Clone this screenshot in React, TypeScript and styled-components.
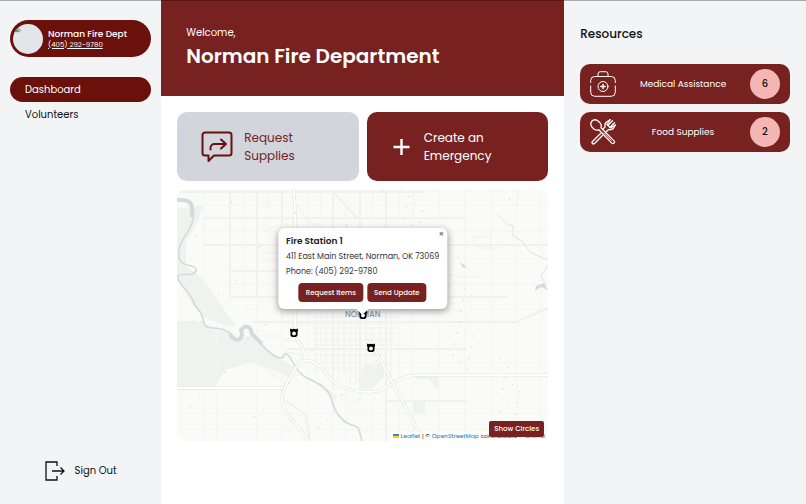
import React from "react";
import styled, { createGlobalStyle, css } from "styled-components";

const colors = {
  maroon: "#6a110b",
  brick: "#772220",
  panel: "#f2f4f6",
  slate: "#d2d5dc",
  pink: "#f4b5b5",
  ink: "#111111",
};

const GlobalStyle = createGlobalStyle`
  *, *::before, *::after { box-sizing: border-box; }
  body {
    margin: 0;
    background: #fff;
    color: ${colors.ink};
    font-family: Poppins, Inter, "Open Sans", sans-serif;
  }
  button { font-family: inherit; border: 0; cursor: pointer; }
  h1, h2, h3, p, ul { margin: 0; padding: 0; }
  ul { list-style: none; }
  a { color: inherit; }
`;

const Page = styled.div`
  display: grid;
  grid-template-columns: 2fr 5fr 3fr;
  min-height: 100vh;
`;

const Sidebar = styled.aside`
  display: flex;
  flex-direction: column;
  padding: 19px 10px 20px;
  background: ${colors.panel};
  border-top: 1px solid #aaa9ad;
`;

const Profile = styled.div`
  display: flex;
  align-items: center;
  gap: 5px;
  height: 37px;
  padding: 0 3px;
  border-radius: 19px;
  background: ${colors.maroon};
  color: #fff;
`;

const Avatar = styled.div`
  flex: none;
  width: 30px;
  height: 30px;
  border-radius: 50%;
  overflow: hidden;
  background: #e3e5e9;
  svg { display: block; }
`;

const ProfileText = styled.div`
  white-space: nowrap;
`;

const ProfileName = styled.p`
  font-size: 9px;
  line-height: 12px;
  font-weight: 500;
`;

const Phone = styled.a`
  display: block;
  font-size: 7px;
  line-height: 10px;
`;

const Nav = styled.nav`
  margin-top: 20px;
`;

const NavLink = styled.a<{ $active?: boolean }>`
  display: block;
  padding: 0 15px;
  border-radius: 13px;
  font-size: 10px;
  line-height: 25px;
  text-decoration: none;
  ${(p) =>
    p.$active &&
    css`
      background: ${colors.maroon};
      color: #fff;
    `}
`;

const SignOut = styled.button`
  display: flex;
  align-items: center;
  align-self: center;
  gap: 10px;
  margin-top: auto;
  padding: 0;
  background: none;
  color: ${colors.ink};
  font-size: 10px;
  line-height: 26px;
`;

const Main = styled.main`
  min-width: 0;
`;

const Banner = styled.header`
  display: flex;
  flex-direction: column;
  justify-content: center;
  height: 96px;
  padding: 0 25px 4px;
  border-top: 1px solid #5b1715;
  background: ${colors.brick};
  color: #fff;
`;

const Greeting = styled.p`
  font-size: 10px;
  line-height: 18px;
`;

const Title = styled.h1`
  font-size: 20px;
  line-height: 28px;
  font-weight: 600;
`;

const Content = styled.div`
  display: grid;
  gap: 8px;
  padding: 16px;
`;

const Actions = styled.div`
  display: grid;
  grid-template-columns: 1fr 1fr;
  gap: 8px;
`;

const ActionButton = styled.button<{ $primary?: boolean }>`
  display: flex;
  align-items: center;
  gap: 11px;
  min-height: 69px;
  padding: 0 24px;
  border-radius: 10px;
  background: ${(p) => (p.$primary ? colors.brick : colors.slate)};
  color: ${(p) => (p.$primary ? "#fff" : colors.brick)};
  font-size: 12px;
  line-height: 18px;
  text-align: left;
  svg { flex: none; }
`;

const ActionLabel = styled.span`
  width: 76px;
`;

const MapFrame = styled.section`
  position: relative;
  height: 50vh;
  border-radius: 10px;
  overflow: hidden;
  background: #fafaf8;
`;

const MapDrawing = styled.svg`
  display: block;
  width: 100%;
  height: 100%;
`;

const CityLabel = styled.span`
  position: absolute;
  left: 50%;
  top: 50%;
  transform: translate(-50%, -50%);
  color: #9299a6;
  font-size: 8px;
  font-weight: 500;
  line-height: 10px;
`;

const Pin = styled.button<{ $x: number; $y: number }>`
  position: absolute;
  left: ${(p) => p.$x}%;
  top: ${(p) => p.$y}%;
  padding: 0;
  background: none;
  transform: translate(-50%, -50%);
  svg { display: block; }
`;

const Popup = styled.div`
  position: absolute;
  left: 50%;
  bottom: calc(50% + 6px);
  transform: translateX(-50%);
  padding: 7px 8px 7px;
  border-radius: 6px;
  background: #fff;
  box-shadow: 0 2px 7px rgba(0, 0, 0, 0.4);
  color: #333;
  white-space: nowrap;
  &::after {
    content: "";
    position: absolute;
    left: 50%;
    top: 100%;
    transform: translateX(-50%);
    border: 6px solid transparent;
    border-top-color: #fff;
    border-bottom: 0;
  }
`;

const PopupTitle = styled.h3`
  font-size: 9px;
  line-height: 12px;
  font-weight: 600;
  color: #222;
`;

const PopupLine = styled.p`
  margin-top: 5px;
  font-size: 8px;
  line-height: 10px;
`;

const PopupActions = styled.div`
  display: flex;
  justify-content: center;
  gap: 4px;
  margin-top: 6px;
`;

const SmallButton = styled.button`
  padding: 0 7px;
  border-radius: 4px;
  background: ${colors.brick};
  color: #fff;
  font-size: 7px;
  font-weight: 500;
  line-height: 19px;
`;

const CloseButton = styled.button`
  position: absolute;
  top: 2px;
  right: 3px;
  padding: 0;
  background: none;
  color: #555;
  font-size: 9px;
  line-height: 9px;
`;

const Attribution = styled.div`
  position: absolute;
  right: 0;
  bottom: 0;
  padding: 0 3px;
  background: rgba(255, 255, 255, 0.8);
  color: #333;
  font-size: 6px;
  line-height: 9px;
  white-space: nowrap;
  a { color: #2678a5; text-decoration: none; }
`;

const CirclesButton = styled(SmallButton)`
  position: absolute;
  right: 4px;
  bottom: 4px;
  padding: 0 5px;
  border-radius: 2px;
  line-height: 16px;
`;

const Resources = styled.aside`
  padding: 22px 16px;
  border-top: 1px solid #aaa9ad;
  background: ${colors.panel};
`;

const ResourcesTitle = styled.h2`
  font-size: 12px;
  line-height: 22px;
  font-weight: 500;
`;

const ResourceList = styled.ul`
  display: grid;
  gap: 8px;
  margin-top: 19px;
`;

const Resource = styled.li`
  display: flex;
  align-items: center;
  justify-content: space-between;
  height: 40px;
  padding: 0 10px;
  border-radius: 10px;
  background: ${colors.brick};
  color: #fff;
  font-size: 9px;
`;

const Count = styled.span`
  width: 30px;
  border-radius: 50%;
  background: ${colors.pink};
  color: ${colors.ink};
  font-size: 10px;
  font-weight: 500;
  line-height: 30px;
  text-align: center;
`;

const BrokenImage = () => (
  <svg width="9" height="9" viewBox="0 0 9 9" aria-hidden="true">
    <path d="M1 5h7v4H1z" fill="#c8dcf2" />
    <path d="M1 8l3-3 3 3z" fill="#59a84c" />
    <path d="M1 5h5l2 2" stroke="#8c9194" fill="none" />
  </svg>
);

const SignOutIcon = () => (
  <svg width="20" height="20" viewBox="0 0 20 20" fill="none" stroke="#111" strokeWidth="1.3" aria-hidden="true">
    <path d="M12 5V1H1v18h11v-4" />
    <path d="M7 10h12M15.500 6.500L19 10l-3.500 3.500" />
  </svg>
);

const RequestIcon = () => (
  <svg width="32" height="32" viewBox="0 0 32 32" fill="none" stroke={colors.maroon} strokeWidth="2" strokeLinejoin="round" aria-hidden="true">
    <path d="M4 1.500h24a2.500 2.500 0 0 1 2.500 2.500v18a2.500 2.500 0 0 1-2.500 2.500H13L7.500 30v-5.500H4A2.500 2.500 0 0 1 1.500 22V4A2.500 2.500 0 0 1 4 1.500z" />
    <path d="M9.500 18.500v-1.500a4 4 0 0 1 4-4h11M20 8.500l5 4.500-5 4.500" strokeLinecap="round" />
  </svg>
);

const PlusIcon = () => (
  <svg width="22" height="22" viewBox="0 0 22 22" stroke="#fff" strokeWidth="2.4" aria-hidden="true">
    <path d="M10.500 3v16M2.500 11h16" />
  </svg>
);

const MedicalIcon = () => (
  <svg width="26" height="26" viewBox="0 0 26 26" fill="none" stroke="#fff" strokeWidth="1" strokeLinecap="round" aria-hidden="true">
    <path d="M8 5.500V3a2.300 2.300 0 0 1 2.300-2.300h5.400A2.300 2.300 0 0 1 18 3v2.500" />
    <path d="M.7 11.500V9.500a4 4 0 0 1 4-4h16.600a4 4 0 0 1 4 4v2M.7 15v6.300a4 4 0 0 0 4 4h16.600a4 4 0 0 0 4-4V15" />
    <circle cx="13" cy="15.500" r="5" />
    <path d="M13 13.300v4.400M10.800 15.500h4.400" strokeWidth="1.300" />
  </svg>
);

const FoodIcon = () => (
  <svg width="26" height="26" viewBox="0 0 26 26" fill="none" stroke="#fff" strokeWidth="1.300" strokeLinejoin="round" strokeLinecap="round" aria-hidden="true">
    <path d="M10.500 14.500l-8 8a1.400 1.400 0 0 0 2 2l8-8M15.500 13.500l3-3c2 .6 3.700.1 4.800-1L25.300 6M20 .8L16.500 3c-1.600 1.500-2 3.200-1.400 5L12.500 10.500" />
    <path d="M22.500 1.800L18.500 5.800M24.500 3.800L20.500 7.800M20 .8L17 5.500l3.500 3.500 4.800-3" />
    <path d="M8.800 10.800l13 13.300a1.500 1.500 0 0 0 2.200-2.200L11 8.700C11.800 6.500 10.500 3.800 8 2 5.800.4 3.500.4 2 2S.5 6 2 8.200c1.700 2.400 4.500 3.500 6.800 2.600z" fill={colors.brick} />
    <path d="M14 13.800l7 7.200" strokeWidth=".8" />
  </svg>
);

const StationIcon = () => (
  <svg width="9" height="10" viewBox="0 0 9 10" aria-hidden="true">
    <path d="M1 .5l1.500.8L4.500.8l2 .5L8 .5l.7 2L8 4v3.500L6.500 9h-4L1 7.500V4L.3 2.500z" fill="#000" />
    <circle cx="4.500" cy="5.500" r="1.900" fill="#fff" />
  </svg>
);

const specks = Array.from({ length: 125 }, (_, i) => ({
  x: i < 75 ? 225 + ((i * 47) % 140) : (i * 61) % 215,
  y: (i * 83 + (i % 7) * 13) % 248,
  dx: (i % 3) - 1,
  dy: 1 + (i % 2),
}));

const highways = [
  "M117 0L118 20V146C118 151 126 154 126 162C126 174 107 190 105 209C104 222 117 232 133 253",
  "M125 172C145 169 147 188 162 197C172 202 184 203 193 203C212 203 217 187 240 186H371",
  "M0 199H105",
  "M192 150L210 183L247 253",
];

const CityMap = () => (
  <MapDrawing viewBox="0 0 371 252" preserveAspectRatio="xMidYMid slice" fill="none" aria-hidden="true">
    <rect width="371" height="252" fill="#fafaf9" />
    <g fill="#eff3ef">
      <path d="M0 20L27 16L18 38L9 52V77L27 91L42 113L51 126L60 137H50L25 128L14 113L0 90z" />
      <path d="M0 132H25L38 141H53L61 151L76 145L93 163L120 180L113 188L74 173L48 181L36 201H0z" />
      <path d="M187 175H207V188L194 200H182zM236 187H261V200L251 190H240zM236 212H248V224H236zM128 186L153 201L160 207L157 214L145 199z" />
    </g>
    <g stroke="#f4f4f4" strokeWidth="1">
      <path d="M27 0V252M40 132V252M53 0V122M66 3V108M80 0V252M92 0V115M105 0V252M131 3V252M144 0V175M156 0V252M169 0V252M183 0V252M196 0V252M209 0V252M222 0V252M236 0V252M262 0V252M288 0V252M314 0V252M340 0V252M364 0V252" />
      <path d="M27 16H371M27 42H371M80 69H371M53 95H371M66 121H371M0 147H105M108 135H230M0 174H80M131 174H371M0 225H371M0 241H371" />
    </g>
    <g stroke="#f0f1f1" strokeWidth="2">
      <path d="M53 3V108M80 3V108M105 3V126M156 3V200M183 3V203M209 3V252M0 3H250M27 29H290M27 56H371M53 82H250M53 108H330M75 133H340L371 119M108 160H290M209 212H290M156 3L185 34M105 209L128 225L133 252" />
    </g>
    <g stroke="#f0f0f1" strokeWidth="1">
      <path d="M137 128H220M137 139H220M137 145H218M137 151H218M137 156H225M137 166H210M137 179H210M139 126V184M149 126V180M161 126V192M167 126V185M173 126V195M179 126V195M189 126V184M203 126V180M214 126V200" />
      <path d="M88 12L98 24M87 42L101 36M86 64H102M87 71H101M112 5L132 32L150 42M107 151L123 153M108 163L124 165M89 180L110 196M110 188L119 184M296 48H314V57H296zM303 59H323M280 88H305M165 205L174 214L185 209" />
    </g>
    <path d="M0 11C8 11 14 11 16 18C18 28 15 36 10 44C4 53 1 59 2 68C4 80 21 74 19 82C15 89 5 83 1 87C-1 93 14 104 16 112C18 120 24 120 25 127L28 137C36 141 47 137 53 145C58 155 68 151 64 141C70 134 74 139 75 145C83 154 95 169 104 169C109 169 105 161 112 167C118 176 121 186 134 191C145 196 153 201 155 212C158 225 167 234 175 236C183 237 182 242 185 252" stroke="#d5dadd" strokeWidth="1.600" />
    <path d="M0 11C8 11 14 11 15 18V28M53 145C58 155 68 151 64 141C70 134 74 139 75 145L85 155" stroke="#d5dadd" strokeWidth="4" />
    <path d="M320 25L330 35L336 37V47L345 52L353 63L370 71M371 76L364 87L368 94L361 98" stroke="#e0e3e5" strokeWidth="1" />
    <path d="M283 73L290 78L286 79zM359 97L367 94L371 101L364 98L358 102z" fill="#d6dade" />
    {highways.map((d) => (
      <g key={d}>
        <path d={d} stroke="#e2e3e3" strokeWidth="3" />
        <path d={d} stroke="#fff" strokeWidth="1.800" />
      </g>
    ))}
    <g stroke="#dcdfe0" strokeWidth="1">
      {specks.map((s, i) => (
        <path key={i} d={`M${s.x} ${s.y}l${s.dx} ${s.dy}`} />
      ))}
    </g>
  </MapDrawing>
);

const Flag = () => (
  <svg width="6" height="4" viewBox="0 0 6 4" aria-hidden="true">
    <path d="M0 0h6v2H0z" fill="#4c7be1" />
    <path d="M0 2h6v2H0z" fill="#ffd500" />
  </svg>
);

const stations = [
  { name: "Fire Station 1", x: 50, y: 50 },
  { name: "Fire Station 2", x: 31.5, y: 57 },
  { name: "Fire Station 3", x: 52.3, y: 63 },
];

const resources = [
  { name: "Medical Assistance", count: 6, icon: <MedicalIcon /> },
  { name: "Food Supplies", count: 2, icon: <FoodIcon /> },
];

export default function App() {
  return (
    <>
      <GlobalStyle />
      <Page>
        <Sidebar>
          <Profile>
            <Avatar><BrokenImage /></Avatar>
            <ProfileText>
              <ProfileName>Norman Fire Dept</ProfileName>
              <Phone href="tel:4052929780">(405) 292-9780</Phone>
            </ProfileText>
          </Profile>
          <Nav>
            <NavLink href="#dashboard" $active aria-current="page">Dashboard</NavLink>
            <NavLink href="#volunteers">Volunteers</NavLink>
          </Nav>
          <SignOut type="button"><SignOutIcon />Sign Out</SignOut>
        </Sidebar>
        <Main>
          <Banner>
            <Greeting>Welcome,</Greeting>
            <Title>Norman Fire Department</Title>
          </Banner>
          <Content>
            <Actions>
              <ActionButton type="button">
                <RequestIcon />
                <ActionLabel>Request Supplies</ActionLabel>
              </ActionButton>
              <ActionButton type="button" $primary>
                <PlusIcon />
                <ActionLabel>Create an Emergency</ActionLabel>
              </ActionButton>
            </Actions>
            <MapFrame aria-label="Map of Norman">
              <CityMap />
              <CityLabel>NORMAN</CityLabel>
              {stations.map((s) => (
                <Pin key={s.name} type="button" aria-label={s.name} $x={s.x} $y={s.y}>
                  <StationIcon />
                </Pin>
              ))}
              <Popup>
                <PopupTitle>Fire Station 1</PopupTitle>
                <PopupLine>411 East Main Street, Norman, OK 73069</PopupLine>
                <PopupLine>Phone: (405) 292-9780</PopupLine>
                <PopupActions>
                  <SmallButton type="button">Request Items</SmallButton>
                  <SmallButton type="button">Send Update</SmallButton>
                </PopupActions>
                <CloseButton type="button" aria-label="Close popup">×</CloseButton>
              </Popup>
              <Attribution>
                <Flag /> <a href="#leaflet">Leaflet</a> | © <a href="#osm">OpenStreetMap</a> contributors © <a href="#carto">CARTO</a>
              </Attribution>
              <CirclesButton type="button">Show Circles</CirclesButton>
            </MapFrame>
          </Content>
        </Main>
        <Resources>
          <ResourcesTitle>Resources</ResourcesTitle>
          <ResourceList>
            {resources.map((r) => (
              <Resource key={r.name}>
                {r.icon}
                <span>{r.name}</span>
                <Count>{r.count}</Count>
              </Resource>
            ))}
          </ResourceList>
        </Resources>
      </Page>
    </>
  );
}
